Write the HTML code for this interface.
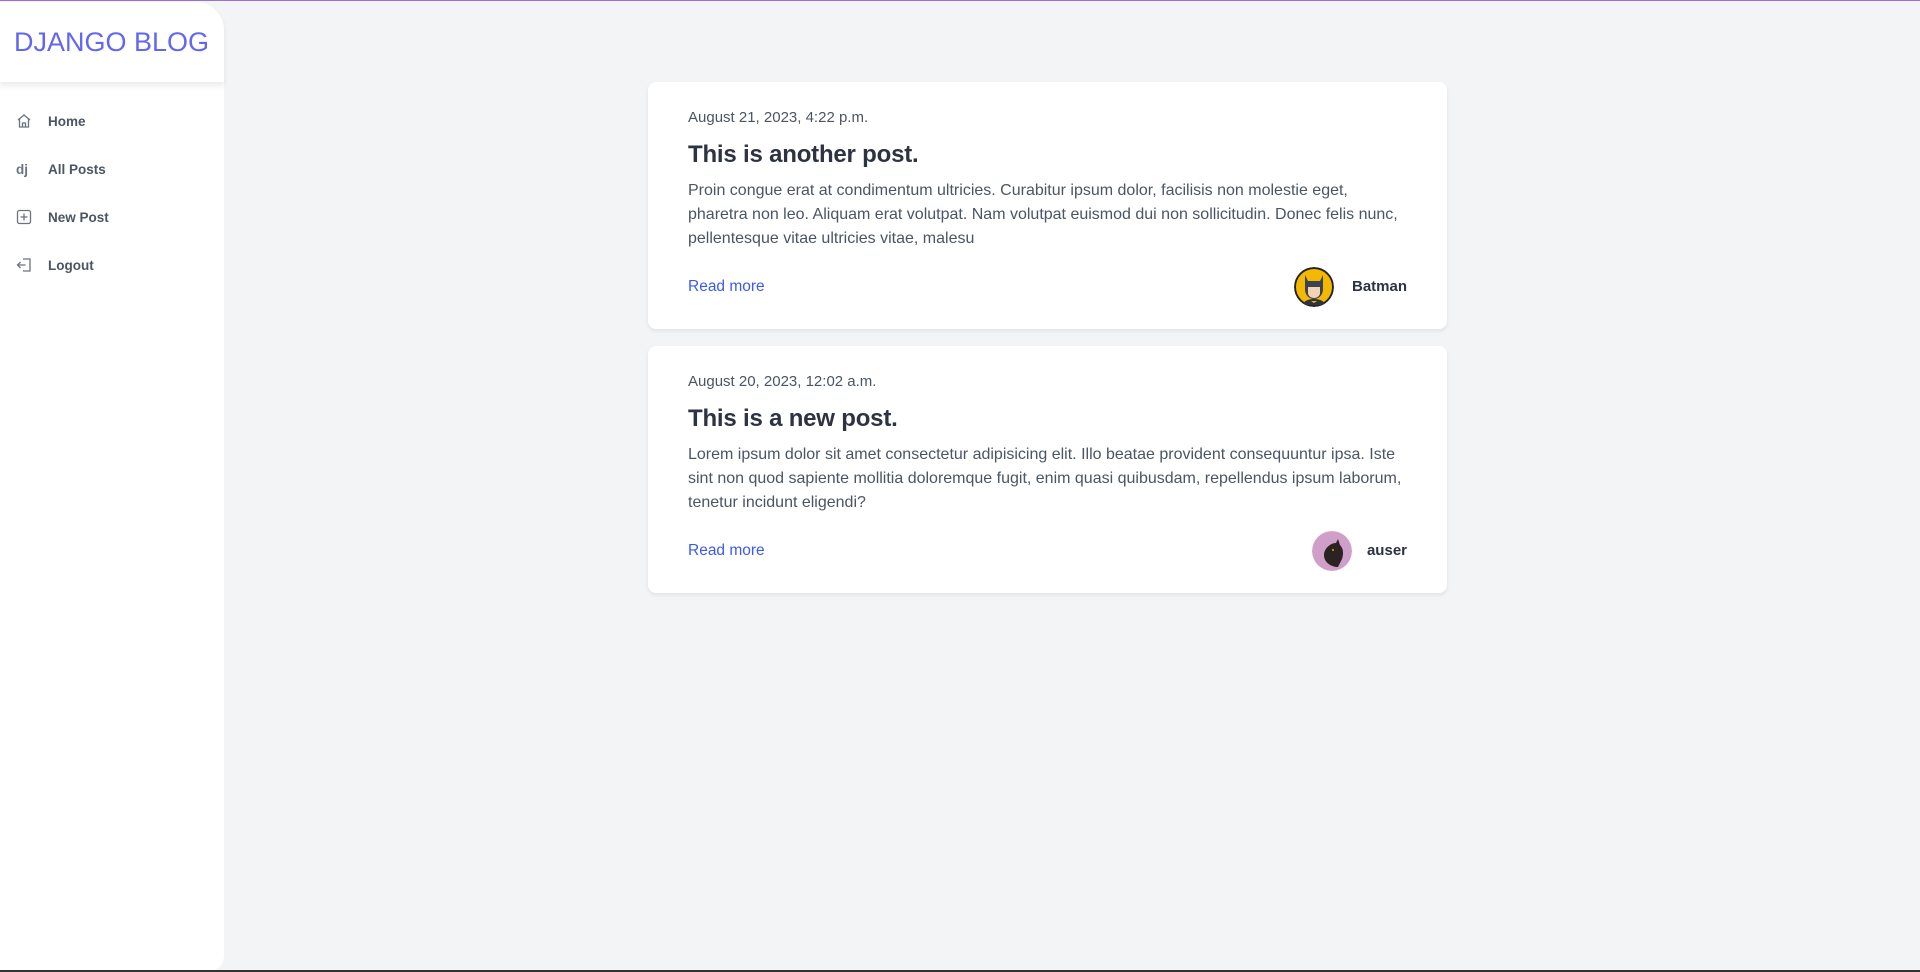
<!DOCTYPE html>
<html><head><meta charset="utf-8"><style>
*{box-sizing:border-box;margin:0;padding:0}
body{width:1920px;height:972px;background:#f3f4f6;font-family:"Liberation Sans",sans-serif;position:relative;overflow:hidden;border-top:1px solid #9b6fd3}
.side{position:absolute;left:0;top:1px;width:224px;height:970px;background:#fff;border-top-right-radius:28px;border-bottom-right-radius:16px}
.hdr{height:80px;box-shadow:0 4px 6px rgba(0,0,0,.08);display:flex;align-items:center;padding-left:14px;color:#6366f1;font-size:27px;border-top-right-radius:28px}
.nav{position:absolute;left:0;width:224px;height:24px;display:flex;align-items:center;font-size:13.5px;font-weight:bold;color:#4b5563}
.nav svg{position:absolute;left:16px}
.nav span{position:absolute;left:48px}
.card{position:absolute;left:648px;width:799px;height:247px;background:#fff;border-radius:8px;box-shadow:0 2px 4px rgba(0,0,0,.08);padding:0 40px}
.date{position:absolute;top:27px;left:40px;font-size:15px;color:#4b5563;font-weight:300}
.title{position:absolute;top:59px;left:40px;font-size:24px;font-weight:bold;color:#2d3340;letter-spacing:-0.2px}
.body{position:absolute;top:97px;left:40px;font-size:16px;line-height:24px;color:#4b5563;white-space:nowrap}
.rm{position:absolute;top:196px;left:40px;font-size:15.5px;color:#3b5bf0}
.name{position:absolute;top:196px;right:40px;font-size:15px;font-weight:bold;color:#2d3340}
.av{position:absolute;top:185px;width:40px;height:40px;border-radius:50%}
</style></head><body>
<div class="side">
<div class="hdr">DJANGO BLOG</div>
<div class="nav" style="top:107px"><svg width="16" height="16" viewBox="0 0 16 16" fill="none" stroke="#6b7280" stroke-width="1.3"><path d="M2 7L8 2l6 5M3.5 6v8h9V6M6.5 14v-4h3v4"/></svg><span>Home</span></div>
<div class="nav" style="top:155px"><span style="left:16px;color:#6b7280">dj</span><span>All Posts</span></div>
<div class="nav" style="top:203px"><svg width="16" height="16" viewBox="0 0 16 16" fill="none" stroke="#6b7280" stroke-width="1.3"><rect x="1.5" y="1.5" width="13" height="13" rx="2"/><path d="M8 4.5v7M4.5 8h7"/></svg><span>New Post</span></div>
<div class="nav" style="top:251px"><svg width="16" height="16" viewBox="0 0 16 16" fill="none" stroke="#6b7280" stroke-width="1.3"><path d="M7 2h7v12H7M1.5 8h8M4.5 5l-3 3 3 3"/></svg><span>Logout</span></div>
</div>
<div class="card" style="top:81px">
<div class="date">August 21, 2023, 4:22 p.m.</div>
<div class="title">This is another post.</div>
<div class="body">Proin congue erat at condimentum ultricies. Curabitur ipsum dolor, facilisis non molestie eget,<br>pharetra non leo. Aliquam erat volutpat. Nam volutpat euismod dui non sollicitudin. Donec felis nunc,<br>pellentesque vitae ultricies vitae, malesu</div>
<div class="rm">Read more</div>
<svg class="av" style="left:646px" viewBox="0 0 40 40"><circle cx="20" cy="20" r="19" fill="#f5b800" stroke="#222" stroke-width="2"/><path d="M11 8l3 6h12l3-6v14c0 6-4 10-9 10s-9-4-9-10z" fill="#3b4252"/><path d="M14 20h12v6c0 3-3 5-6 5s-6-2-6-5z" fill="#f3d2b8"/><path d="M8 38c2-4 6-6 12-6s10 2 12 6" fill="#2e3440"/><path d="M17 34h6l-3 2z" fill="#f5b800"/></svg>
<div class="name">Batman</div>
</div>
<div class="card" style="top:345px">
<div class="date">August 20, 2023, 12:02 a.m.</div>
<div class="title">This is a new post.</div>
<div class="body">Lorem ipsum dolor sit amet consectetur adipisicing elit. Illo beatae provident consequuntur ipsa. Iste<br>sint non quod sapiente mollitia doloremque fugit, enim quasi quibusdam, repellendus ipsum laborum,<br>tenetur incidunt eligendi?</div>
<div class="rm">Read more</div>
<svg class="av" style="left:664px" viewBox="0 0 40 40"><circle cx="20" cy="20" r="20" fill="#cf9ec9"/><path d="M12 24c0-6 6-12 12-12l2-4 2 6c3 3 4 8 2 14l-4 8c-6 0-14-4-14-12z" fill="#2b2321"/><circle cx="21" cy="19" r="1" fill="#e8a020"/></svg>
<div class="name">auser</div>
</div>
<div style="position:absolute;left:0;bottom:0;width:1920px;height:2px;background:#333"></div>
</body></html>
